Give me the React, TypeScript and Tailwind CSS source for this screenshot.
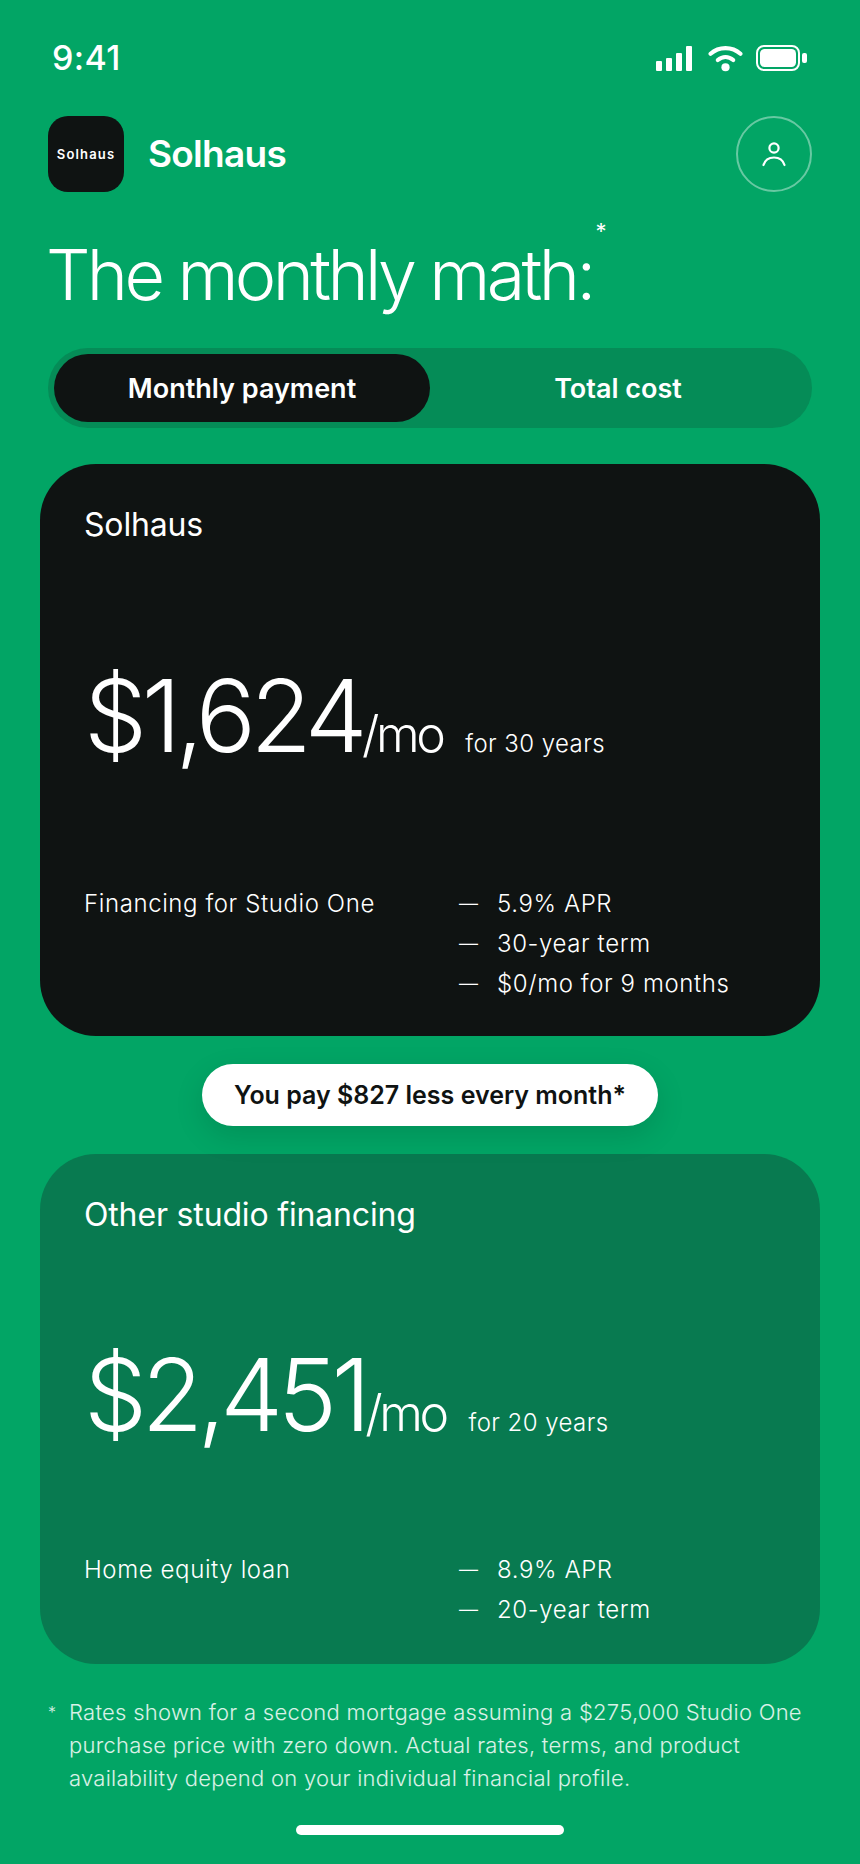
const Inter = "font-['Inter',sans-serif]";

function StatusIcons() {
  return (
    <div className="flex items-center">
      <svg width="36" height="25" viewBox="0 0 36 25" fill="white">
        <rect x="0" y="15" width="6" height="10" rx="1" />
        <rect x="10" y="12" width="6" height="13" rx="1" />
        <rect x="20" y="7" width="6" height="18" rx="1" />
        <rect x="30" y="0" width="6" height="25" rx="1" />
      </svg>
      <svg className="ml-4" width="35" height="27" viewBox="0 0 34 26" fill="none" stroke="white" strokeWidth="4" strokeLinecap="round">
        <path d="M2.5 8.5C10.5 1 23.5 1 31.5 8.5" />
        <path d="M9.5 14.5C14 10.5 20 10.5 24.5 14.5" />
        <circle cx="17" cy="21.5" r="4" fill="white" stroke="none" />
      </svg>
      <svg className="ml-[13px]" width="52" height="26" viewBox="0 0 52 26" fill="none">
        <rect x="1" y="1" width="42" height="24" rx="7" stroke="white" strokeWidth="2" />
        <rect x="4" y="4" width="36" height="18" rx="4.5" fill="white" />
        <rect x="46" y="8" width="5" height="10" rx="2" fill="white" />
      </svg>
    </div>
  );
}

function PlanCard({
  title,
  amount,
  term,
  product,
  details,
  className,
  priceClass,
  detailsClass,
}: {
  title: string;
  amount: string;
  term: string;
  product: string;
  details: string[];
  className: string;
  priceClass: string;
  detailsClass: string;
}) {
  return (
    <section className={`mx-10 rounded-[56px] px-11 pt-[41px] ${className}`}>
      <h2 className="text-[32px] leading-[40px] font-normal tracking-[-0.005em] text-white">{title}</h2>
      <div className={`flex items-baseline text-white ${priceClass}`}>
        <span className="text-[100px] leading-[100px] font-light tracking-[-0.055em]">{amount}</span>
        <span className="text-[50px] leading-[56px] font-light tracking-[-0.07em]">/mo</span>
        <span className="ml-[23px] text-[24px] leading-[32px] font-[350] tracking-[0.018em]">{term}</span>
      </div>
      <div className={`flex text-[24px] leading-[40px] font-[350] tracking-[0.025em] text-white ${detailsClass}`}>
        <p className="w-[373px]">{product}</p>
        <ul>
          {details.map((d) => (
            <li key={d} className="flex">
              <span className="w-10 pl-0.5 text-[19px]">—</span>
              {d}
            </li>
          ))}
        </ul>
      </div>
    </section>
  );
}

export default function App() {
  return (
    <div className={`${Inter} h-[1864px] w-[860px] overflow-hidden bg-[#02a565] text-white`}>
      <div className="flex items-center justify-between pl-[52px] pr-[52px] pt-[36px]">
        <span className="text-[34px] leading-[44px] font-medium tracking-[0.01em]">9:41</span>
        <StatusIcons />
      </div>

      <header className="mt-[36px] flex items-center justify-between px-12">
        <div className="flex items-center gap-6">
          <div className="flex h-[76px] w-[76px] items-center justify-center rounded-[20px] bg-[#0f1312] pt-0.5 text-[13px] font-semibold tracking-[0.09em]">
            Solhaus
          </div>
          <span className="text-[37px] font-semibold tracking-[-0.02em]">Solhaus</span>
        </div>
        <button className="flex h-[76px] w-[76px] items-center justify-center rounded-full border-2 border-white/40">
          <svg width="28" height="28" viewBox="0 0 28 28" fill="none" stroke="white" strokeWidth="2.2" strokeLinecap="round">
            <circle cx="14" cy="8" r="4.6" />
            <path d="M3.5 25C5 20 9 17.5 14 17.5S23 20 24.5 25" />
          </svg>
        </button>
      </header>

      <h1 className="mt-[41px] pl-[46px] text-[70px] leading-[84px] font-light tracking-[-0.052em]">
        The monthly math:
        <span className="relative -top-[61px] ml-[3px] text-[22px] font-normal tracking-normal">*</span>
      </h1>

      <div className="mx-12 mt-[14px] flex h-20 rounded-full bg-[#058c57] p-1.5">
        <div className="flex flex-1 items-center justify-center rounded-full bg-[#0f1312] pt-0.5 text-[27px] font-semibold">
          Monthly payment
        </div>
        <div className="flex flex-1 items-center justify-center pt-0.5 text-[27px] font-semibold">Total cost</div>
      </div>

      <div className="mt-[36px]">
        <PlanCard
          className="h-[572px] bg-[#0f1312]"
          priceClass="mt-[121px]"
          detailsClass="mt-[118px]"
          title="Solhaus"
          amount="$1,624"
          term="for 30 years"
          product="Financing for Studio One"
          details={['5.9% APR', '30-year term', '$0/mo for 9 months']}
        />
      </div>

      <div className="mt-7 flex justify-center">
        <div className="flex h-[62px] w-[456px] items-center justify-center rounded-full bg-white pt-0.5 text-[25px] font-semibold text-[#0f1312] shadow-[0_10px_30px_rgba(0,0,0,0.12)]">
          You pay $827 less every month*
        </div>
      </div>

      <div className="mt-7">
        <PlanCard
          className="h-[510px] bg-[#087a50]"
          priceClass="mt-[110px]"
          detailsClass="mt-[105px]"
          title="Other studio financing"
          amount="$2,451"
          term="for 20 years"
          product="Home equity loan"
          details={['8.9% APR', '20-year term']}
        />
      </div>

      <div className="mt-[32px] flex px-12 text-[22px] leading-[33px] font-light tracking-[0.012em] text-white/85">
        <span className="w-[21px] shrink-0 text-[16px]">*</span>
        <p>
          Rates shown for a second mortgage assuming a $275,000 Studio One purchase price with zero down. Actual rates,
          terms, and product availability depend on your individual financial profile.
        </p>
      </div>

      <div className="mx-auto mt-[30px] h-2.5 w-[268px] rounded-full bg-white" />
    </div>
  );
}
